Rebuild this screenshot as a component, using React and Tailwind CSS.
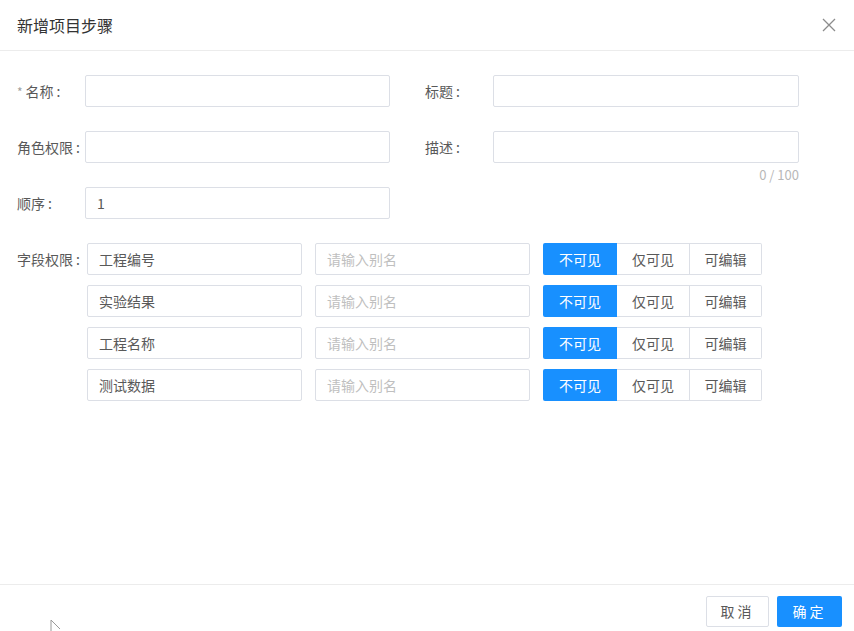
const fields = ["工程编号", "实验结果", "工程名称", "测试数据"];

function Input({ value, placeholder, className = "" }) {
  return (
    <div
      className={`h-[32px] flex items-center px-[11px] border border-[#dcdfe6] rounded-[2px] bg-white text-[14px] ${className}`}
    >
      {value ? (
        <span className="text-[#595959]">{value}</span>
      ) : (
        <span className="text-[#bfbfbf]">{placeholder}</span>
      )}
    </div>
  );
}

function Label({ children, required, className = "w-[68px]" }) {
  return (
    <div className={`shrink-0 text-[14px] text-[#595959] ${className}`}>
      {required && <span className="text-[#a0a0a0] text-[12px] mr-[3px]">*</span>}
      {children}
      <span className="ml-[3px]">:</span>
    </div>
  );
}

export default function App() {
  return (
    <div
      className="relative w-[854px] h-[631px] flex flex-col bg-white overflow-hidden"
      style={{ fontFamily: '"Noto Sans CJK SC", "Noto Sans", sans-serif' }}
    >
      {/* Header */}
      <div className="h-[51px] shrink-0 flex items-center justify-between pl-[17px] pr-[18px] border-b border-[#ececec]">
        <span className="text-[16px] text-[#333]">新增项目步骤</span>
        <svg width="14" height="14" viewBox="0 0 14 14" className="text-[#8c8c8c]">
          <path d="M1 1 L13 13 M13 1 L1 13" stroke="currentColor" strokeWidth="1.3" />
        </svg>
      </div>

      {/* Body */}
      <div className="flex-1 pl-[17px] pt-[24px]">
        <div className="flex gap-[35px]">
          <div className="w-[373px] flex items-center">
            <Label required>名称</Label>
            <Input className="flex-1" />
          </div>
          <div className="w-[374px] flex items-center">
            <Label>标题</Label>
            <Input className="flex-1" />
          </div>
        </div>

        <div className="flex gap-[35px] mt-[24px]">
          <div className="w-[373px] flex items-center">
            <Label>角色权限</Label>
            <Input className="flex-1" />
          </div>
          <div className="w-[374px]">
            <div className="flex items-center">
              <Label>描述</Label>
              <Input className="flex-1" />
            </div>
            <div className="h-0 text-right text-[13px] leading-[24px] text-[#b8b8b8]">0 / 100</div>
          </div>
        </div>

        <div className="flex mt-[24px]">
          <div className="w-[373px] flex items-center">
            <Label>顺序</Label>
            <Input className="flex-1" value="1" />
          </div>
        </div>

        <div className="flex mt-[24px]">
          <Label className="w-[70px] leading-[32px]">字段权限</Label>
          <div className="flex flex-col gap-[10px]">
            {fields.map((f) => (
              <div key={f} className="flex items-center gap-[13px]">
                <Input className="w-[215px]" value={f} />
                <Input className="w-[215px]" placeholder="请输入别名" />
                <div className="flex h-[32px] text-[14px]">
                  <div className="w-[74px] flex items-center justify-center bg-[#1890ff] text-white rounded-l-[2px]">
                    不可见
                  </div>
                  <div className="w-[73px] flex items-center justify-center border-y border-r border-[#dcdfe6] text-[#595959]">
                    仅可见
                  </div>
                  <div className="w-[72px] flex items-center justify-center border-y border-r border-[#dcdfe6] text-[#595959] rounded-r-[2px]">
                    可编辑
                  </div>
                </div>
              </div>
            ))}
          </div>
        </div>
      </div>

      {/* Footer */}
      <div className="h-[47px] shrink-0 border-t border-[#ececec] flex justify-end items-start gap-[8px] pt-[11px] pr-[12px]">
        <button className="w-[63px] h-[31px] border border-[#dcdfe6] rounded-[2px] bg-white text-[14px] text-[#595959] tracking-[3px]">
          取消
        </button>
        <button className="w-[65px] h-[31px] rounded-[2px] bg-[#1890ff] text-[14px] text-white tracking-[3px]">
          确定
        </button>
      </div>

      {/* mouse cursor */}
      <svg width="14" height="14" viewBox="0 0 14 14" className="absolute left-[50px] top-[620px]">
        <path d="M1 0 L1 13 M1 0 L10 9" stroke="#9a9a9a" strokeWidth="1" fill="none" />
      </svg>
    </div>
  );
}
